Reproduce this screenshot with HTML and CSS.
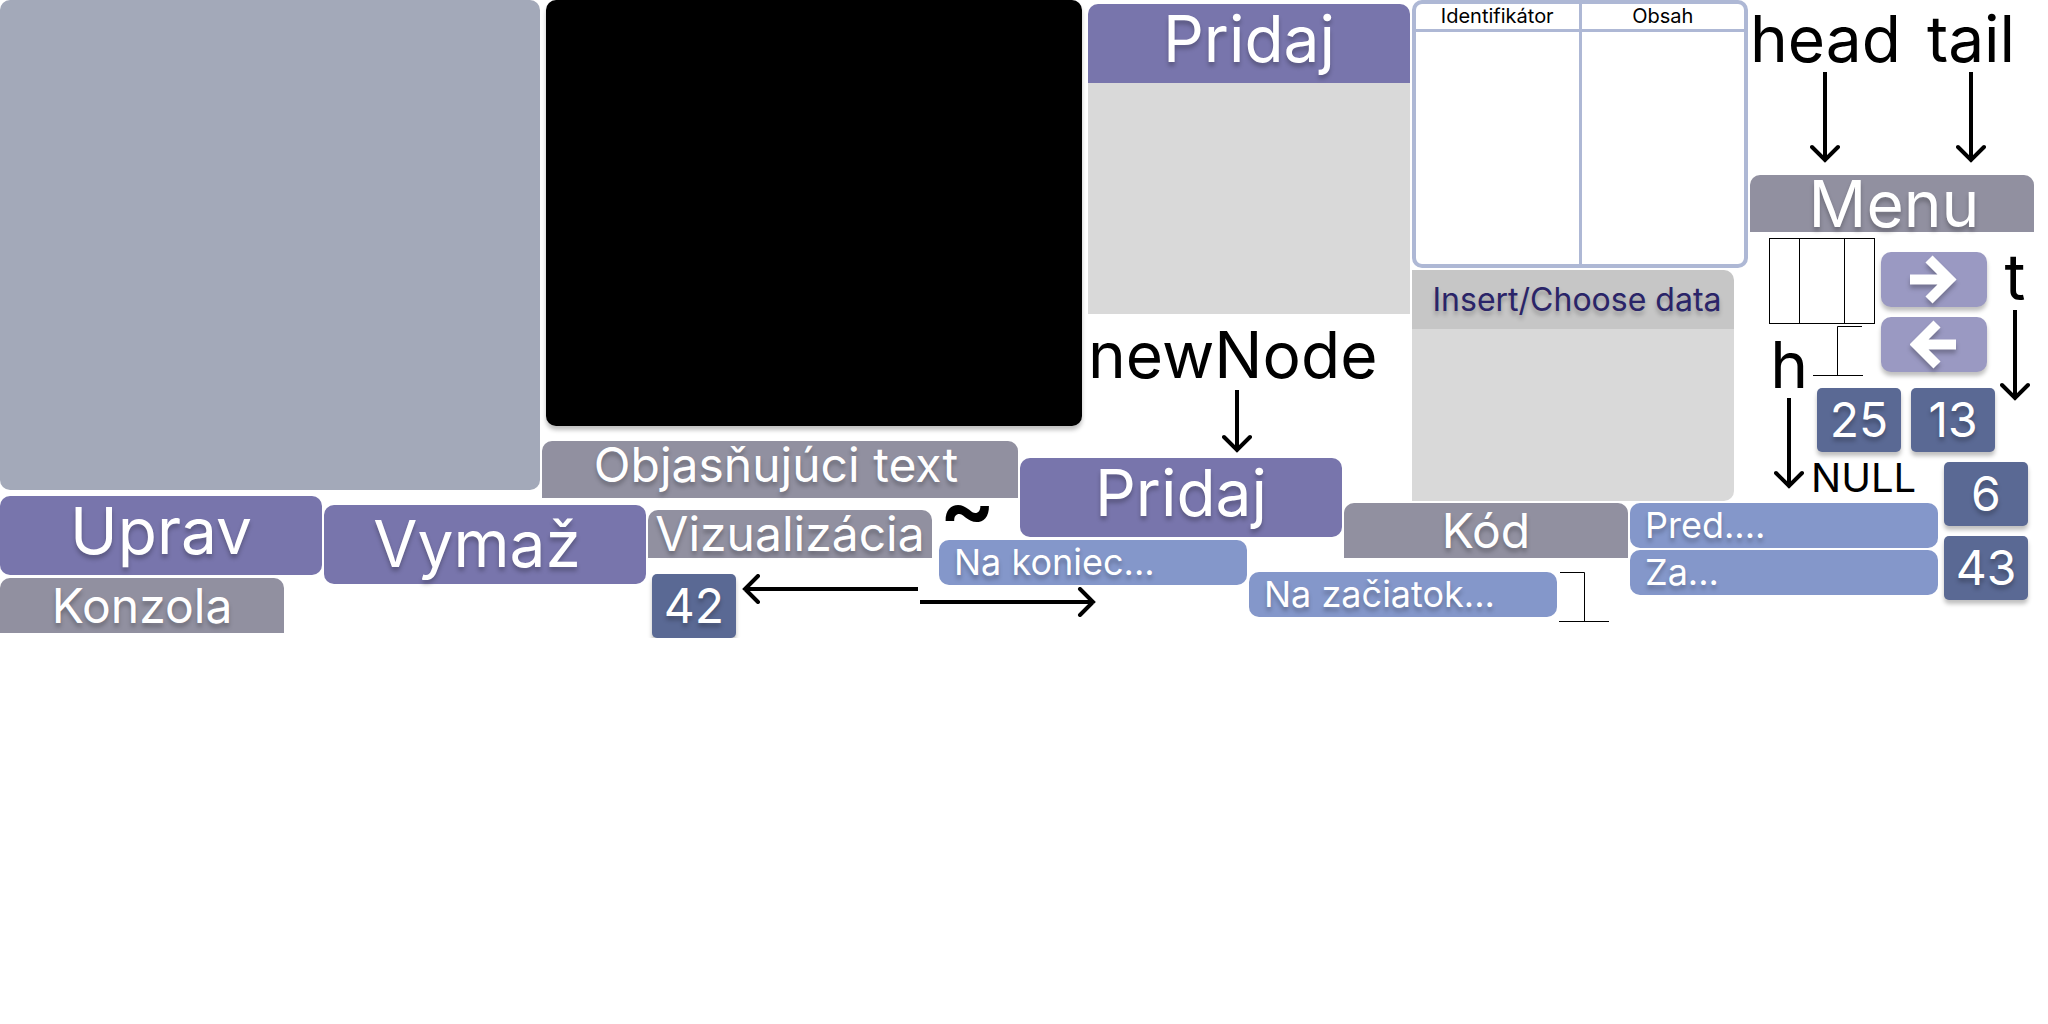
FILE: index.html
```html
<!DOCTYPE html>
<html lang="sk">
<head>
<meta charset="utf-8">
<title>Komponenty</title>
<meta name="viewport" content="width=device-width, initial-scale=1">
<link rel="stylesheet" href="styles.css">
</head>
<body>
<svg class="defs" width="0" height="0" aria-hidden="true">
  <symbol id="down-long" viewBox="0 0 30 91"><path d="M15 0V88M2 75L15 88L28 75"/></symbol>
  <symbol id="down-short" viewBox="0 0 30 63"><path d="M15 0V60M2 47L15 60L28 47"/></symbol>
</svg>
<main class="sheet">
  <div class="surface"></div>

  <section class="screen-zone">
    <div class="screen"></div>
    <h2 class="bar bar-note">Objasňujúci text</h2>
  </section>

  <section class="add-zone">
    <div class="add-panel">
      <button class="action" type="button">Pridaj</button>
      <div class="add-body"></div>
    </div>
    <div class="pointer">
      <span>newNode</span>
      <svg class="arrow" width="30" height="63"><use href="#down-short"/></svg>
    </div>
  </section>

  <section class="data-zone">
    <div class="frame">
      <table>
        <thead><tr><th>Identifikátor</th><th>Obsah</th></tr></thead>
        <tbody><tr><td></td><td></td></tr></tbody>
      </table>
    </div>
    <div class="insert">
      <h2>Insert/Choose data</h2>
      <div class="insert-body"></div>
    </div>
  </section>

  <section class="list-zone">
    <div class="ends">
      <div class="pointer"><span>head</span><svg class="arrow" width="30" height="91"><use href="#down-long"/></svg></div>
      <div class="pointer"><span>tail</span><svg class="arrow" width="30" height="91"><use href="#down-long"/></svg></div>
    </div>
    <h2 class="bar bar-menu">Menu</h2>
    <div class="parts">
      <div class="node"><span></span><span></span><span></span></div>
      <div class="steps">
        <button class="step" type="button" aria-label="Ďalej"><svg width="48" height="50" viewBox="0 0 48 50"><path d="M0 24.500H40M19 4L39.500 24.500L19 45"/></svg></button>
        <button class="step" type="button" aria-label="Späť"><svg width="48" height="50" viewBox="0 0 48 50"><path d="M46 24.500H6M27 4L6.500 24.500L27 45"/></svg></button>
      </div>
      <div class="pointer tail-short"><span>t</span><svg class="arrow" width="30" height="91"><use href="#down-long"/></svg></div>
      <div class="pointer head-short"><span>h</span><svg class="arrow" width="30" height="91"><use href="#down-long"/></svg></div>
      <svg class="ground" width="50" height="50" viewBox="0 0 50 50"><path d="M49 .5H24.500V49.500M0 49.500H50"/></svg>
      <div class="values"><span class="value">25</span><span class="value">13</span></div>
      <span class="null">NULL</span>
      <div class="value-stack"><span class="value">6</span><span class="value">43</span></div>
    </div>
  </section>

  <section class="edit-zone">
    <button class="action" type="button">Uprav</button>
    <h2 class="bar bar-console">Konzola</h2>
  </section>
  <button class="action action-delete" type="button">Vymaž</button>

  <section class="visual-zone">
    <h2 class="bar bar-visual">Vizualizácia</h2>
    <div class="links">
      <span class="value">42</span>
      <svg class="arrow" width="176" height="30" viewBox="0 0 176 30"><path d="M176 15H3M16 2L3 15L16 28"/></svg>
      <svg class="arrow arrow-next" width="176" height="30" viewBox="0 0 176 30"><path d="M0 15H173M160 2L173 15L160 28"/></svg>
    </div>
  </section>
  <span class="tilde">~</span>

  <button class="action action-add" type="button">Pridaj</button>
  <section class="place-zone">
    <button class="option" type="button">Na koniec...</button>
    <button class="option option-low" type="button">Na začiatok...</button>
    <svg class="ground ground-low" width="50" height="50" viewBox="0 0 50 50"><path d="M1 .5H25.500V49.500M0 49.500H50"/></svg>
  </section>
  <h2 class="bar bar-code">Kód</h2>
  <section class="relative-zone">
    <button class="option" type="button">Pred....</button>
    <button class="option" type="button">Za...</button>
  </section>
</main>
</body>
</html>
```
FILE: styles.css
```css
* { box-sizing: border-box; }

body {
  margin: 0;
  background: #fff;
  color: #000;
  font-family: Inter, "Liberation Sans", sans-serif;
  font-optical-sizing: none;
}

h2, button { margin: 0; border: 0; font: inherit; }
svg { display: block; flex: none; }
.defs { position: absolute; }

.sheet {
  display: grid;
  grid-template-columns:
    minmax(0, 322fr) minmax(0, 216fr) minmax(0, 104fr) minmax(0, 289fr)
    minmax(0, 79fr) minmax(0, 66fr) minmax(0, 254fr) minmax(0, 66fr)
    minmax(0, 216fr) minmax(0, 118fr) minmax(0, 298fr);
  grid-template-rows: 458px 38px 7px 37px auto;
  column-gap: 2px;
  align-items: start;
}

/* Shared pieces */
.action, .bar, .value, .option, .step {
  display: flex;
  align-items: center;
  justify-content: center;
  white-space: nowrap;
  color: #fff;
  text-shadow: 0 4px 4px rgba(0, 0, 0, .25);
}

.action {
  width: 100%;
  height: 79px;
  padding: 0 0 10px;
  border-radius: 10px;
  background: #7875ac;
  font-size: 64px;
  line-height: 77px;
}

.bar {
  height: 55px;
  border-radius: 10px 10px 0 0;
  background: #9190a0;
  font-size: 48px;
  font-weight: 400;
  line-height: 58px;
}

.value {
  flex: none;
  width: 84px;
  height: 64px;
  border-radius: 5px;
  background: #5a6994;
  box-shadow: 0 4px 4px rgba(0, 0, 0, .25);
  font-size: 48px;
  line-height: 58px;
}

.option {
  justify-content: flex-start;
  width: 100%;
  height: 45px;
  padding: 0 15px 2px;
  border-radius: 10px;
  background: #8497ca;
  font-size: 36px;
  line-height: 44px;
}

.pointer {
  display: flex;
  flex-direction: column;
  align-items: center;
  width: max-content;
  font-size: 64px;
  line-height: 77px;
}
.pointer .arrow { margin-top: -5px; }

.arrow, .ground, .step svg { fill: none; stroke: #000; }
.arrow { stroke-width: 4; stroke-linecap: round; }
.ground { stroke-width: 1; }

/* Top row */
.surface {
  grid-area: 1 / 1 / 3 / 3;
  height: 490px;
  border-radius: 10px;
  background: #a3a9b9;
}

.screen-zone { grid-area: 1 / 3 / 4 / 7; }
.screen {
  height: 426px;
  margin: 0 4px 15px;
  border-radius: 10px;
  background: #000;
  box-shadow: 0 4px 4px rgba(0, 0, 0, .25);
}
.bar-note { width: 87.5%; height: 57px; padding: 0 8px 10px 0; }

.add-zone { grid-area: 1 / 7 / 2 / 9; padding-top: 4px; }
.add-panel { margin-bottom: 2px; }
.add-panel .action { border-radius: 10px 10px 0 0; }
.add-body { height: 231px; background: #d9d9d9; }
.add-zone .pointer .arrow { margin: -3px 0 0 8px; }

.data-zone { grid-area: 1 / 9 / 4 / 11; }
.frame {
  height: 268px;
  margin-bottom: 2px;
  border: 4px solid #aeb8d5;
  border-radius: 10px;
}
table {
  width: 100%;
  height: 260px;
  table-layout: fixed;
  border-collapse: collapse;
}
th {
  height: 26px;
  padding: 0;
  border-bottom: 3px solid #aeb8d5;
  font-size: 20px;
  font-weight: 400;
  line-height: 24px;
}
td { padding: 0; }
th + th, td + td { border-left: 3px solid #aeb8d5; }

.insert { margin-right: 14px; border-radius: 0 10px 10px 0; overflow: hidden; }
.insert h2 {
  padding: 10px 0 10px 8px;
  background: #c6c6c6;
  color: #2a2468;
  font-size: 32px;
  font-weight: 400;
  line-height: 39px;
  text-align: center;
  white-space: nowrap;
  text-shadow: 0 4px 4px rgba(0, 0, 0, .25);
}
.insert-body { height: 172px; background: #d9d9d9; }

/* Linked list pieces */
.list-zone { grid-area: 1 / 11 / 6 / 12; }
.ends { display: flex; gap: 26px; height: 175px; }
.bar-menu {
  height: 57px;
  margin-right: 14px;
  padding-left: 4px;
  font-size: 64px;
  line-height: 77px;
}

.parts {
  display: grid;
  grid-template-columns: 61px 70px 63px 56px 1fr;
  grid-template-rows: 92px 64px 74px auto;
  align-items: start;
}
.node {
  grid-area: 1 / 1 / 2 / 4;
  display: grid;
  grid-template-columns: 29px 45px 30px;
  width: 106px;
  height: 86px;
  margin: 6px 0 0 19px;
  border: 1px solid #000;
}
.node span + span { border-left: 1px solid #000; }
.steps {
  grid-area: 1 / 3 / 3 / 5;
  display: grid;
  gap: 10px;
  width: 106px;
  padding-top: 20px;
}
.step {
  height: 55px;
  padding: 0;
  border-radius: 10px;
  background: #9a99c2;
  box-shadow: 0 4px 4px rgba(0, 0, 0, .25);
}
.step svg {
  stroke: #fff;
  stroke-width: 10;
  filter: drop-shadow(0 4px 2px rgba(0, 0, 0, .25));
}
.tail-short { grid-area: 1 / 5 / 4 / 6; padding-top: 6px; }
.head-short { grid-area: 2 / 1 / 5 / 2; justify-self: end; padding: 2px 3px 0 0; }
.parts .ground { grid-area: 2 / 2 / 3 / 3; margin: 2px 0 0 2px; }
.values { grid-area: 3 / 2 / 4 / 6; display: flex; gap: 10px; padding-left: 6px; }
.null { grid-area: 4 / 2 / 5 / 4; font-size: 40px; line-height: 32px; }
.value-stack { grid-area: 4 / 4 / 5 / 6; display: grid; gap: 10px; }

/* Bottom row */
.edit-zone { grid-area: 3 / 1 / 6 / 2; display: grid; gap: 3px; }
.bar-console { width: 284px; }
.action-delete { grid-area: 4 / 2 / 6 / 4; margin-top: 2px; padding: 0 16px 2px 0; }

.visual-zone { grid-area: 4 / 4 / 6 / 8; padding-top: 7px; }
.bar-visual { width: 284px; height: 48px; margin-bottom: 16px; }
.links { display: flex; gap: 2px; padding-left: 4px; }
.links .value { margin-right: 4px; }
.arrow-next { margin-top: 13px; }
.tilde {
  grid-area: 3 / 5 / 6 / 7;
  font-size: 84px;
  font-weight: 600;
  line-height: 24px;
}

.action-add { grid-area: 2 / 6 / 6 / 8; }
.place-zone { grid-area: 5 / 5 / 6 / 10; display: flex; gap: 2px; }
.place-zone .option { width: 308px; }
.place-zone .option-low, .ground-low { margin-top: 32px; }
.bar-code { grid-area: 4 / 8 / 6 / 10; }
.relative-zone { grid-area: 4 / 10 / 6 / 12; display: grid; gap: 2px; margin-right: 110px; }
```
